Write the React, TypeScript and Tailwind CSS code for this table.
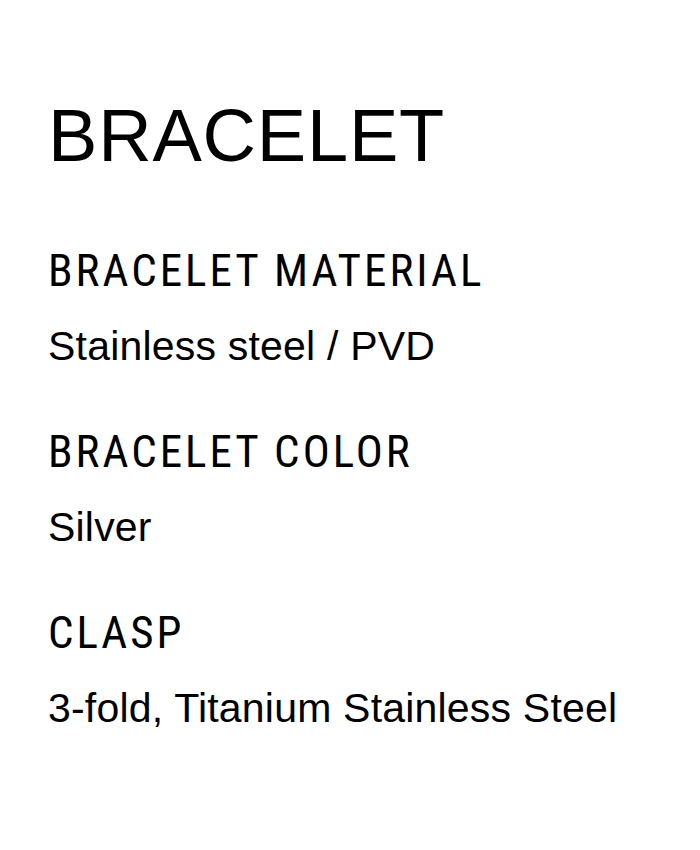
const specs = [
  { label: 'BRACELET MATERIAL', value: 'Stainless steel / PVD' },
  { label: 'BRACELET COLOR', value: 'Silver' },
  { label: 'CLASP', value: '3-fold, Titanium Stainless Steel' },
];

export default function App() {
  return (
    <div className="min-h-[850px] bg-white pl-12 pt-[99px] text-black">
      <h2 className="font-['Liberation_Sans',Arial,sans-serif] text-[74px] leading-none tracking-[0.8px]">BRACELET</h2>
      <dl className="mt-[75px] flex flex-col gap-[62px]">
        {specs.map((s) => (
          <div key={s.label} className="flex flex-col gap-[33px]">
            <dt className="font-['Roboto_Condensed','DejaVu_Sans_Condensed',sans-serif] text-[45px] leading-none tracking-[3px]">{s.label}</dt>
            <dd className="font-['Liberation_Sans',Arial,sans-serif] text-[41px] leading-none tracking-[0.2px]">{s.value}</dd>
          </div>
        ))}
      </dl>
    </div>
  );
}
